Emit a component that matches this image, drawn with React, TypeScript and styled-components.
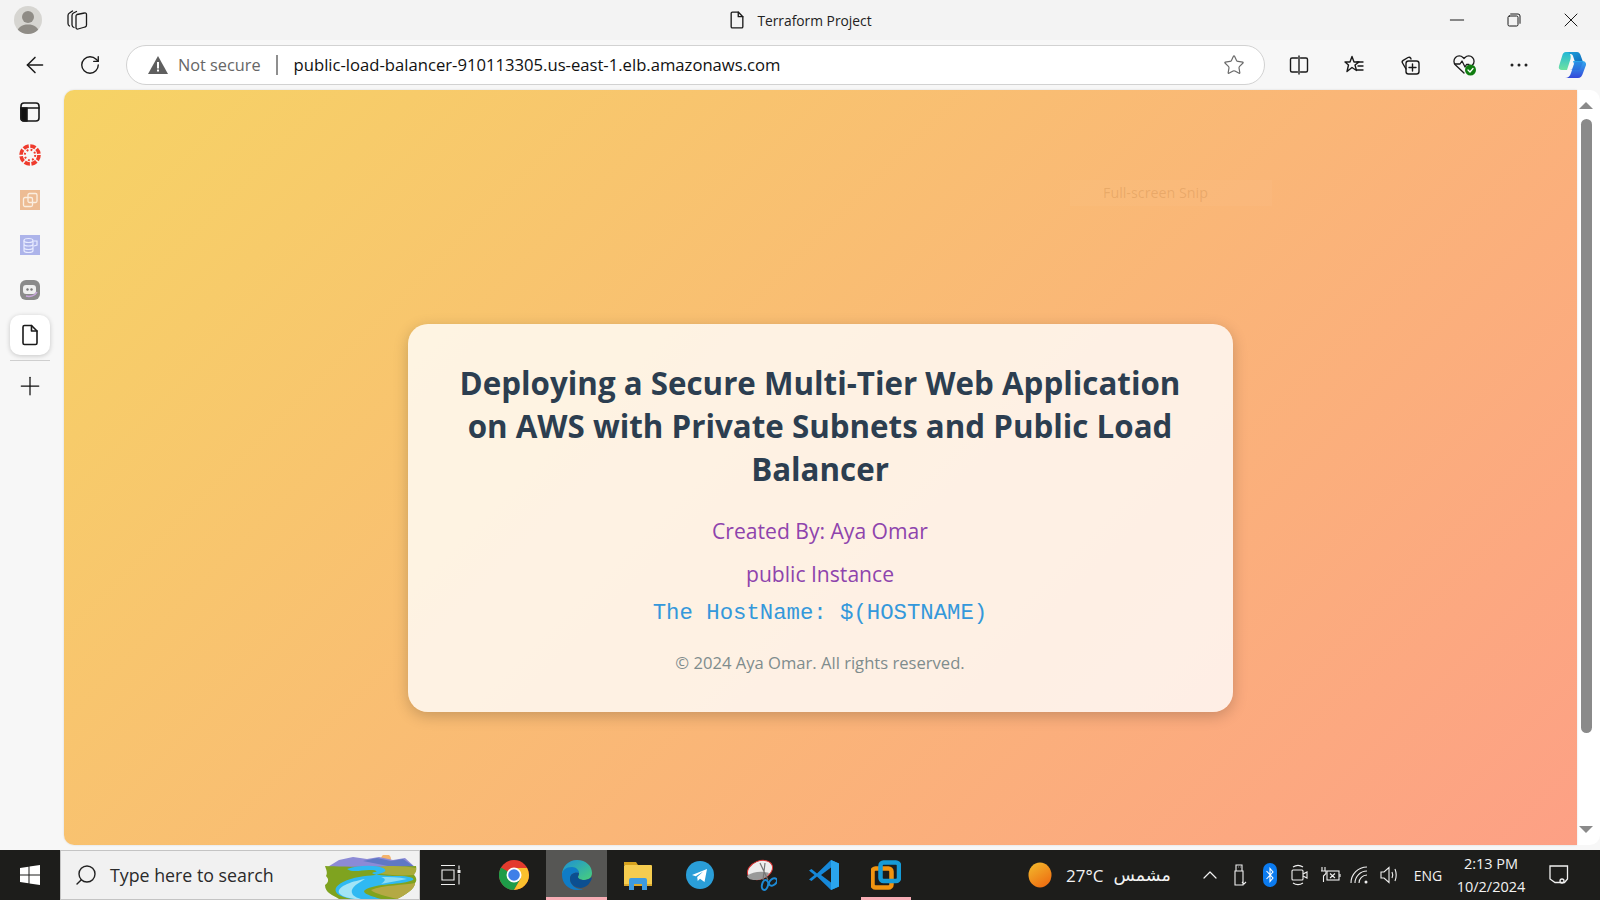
import React from "react";
import styled, { createGlobalStyle } from "styled-components";
import { ChevronUp, Plus, RotateCw, ArrowLeft, Search, Star } from "lucide-react";

const GlobalStyle = createGlobalStyle`
  html, body { margin: 0; padding: 0; height: 100%; overflow: hidden; }
  * { box-sizing: border-box; }
  body { font-family: "Open Sans", "Noto Sans", "DejaVu Sans", sans-serif; }
`;

const Shell = styled("div")`
  width: 1600px;
  height: 900px;
  display: grid;
  grid-template-rows: 40px 50px 1fr 50px;
  grid-template-columns: 64px 1fr;
  background: #f7f7f7;
`;

const TitleBar = styled("header")`
  grid-column: 1 / 3;
  display: grid;
  grid-template-columns: 1fr auto 1fr;
  align-items: center;
  background: #f3f3f3;
  padding-left: 14px;
`;

const TitleLeft = styled("div")`
  display: flex;
  align-items: center;
  gap: 23px;
`;

const Avatar = styled("div")`
  width: 28px;
  height: 28px;
  display: flex;
  border-radius: 50%;
  background: #d6d5d1;
  overflow: hidden;
`;

const TitleCenter = styled("div")`
  display: flex;
  align-items: center;
  gap: 10px;
  font-size: 13.8px;
  color: #222;
  margin-right: 15px;
`;

const WindowControls = styled("div")`
  justify-self: end;
  display: flex;
  align-items: center;
  height: 100%;
  padding-right: 1px;
`;

const WindowButton = styled("div")`
  width: 57px;
  height: 100%;
  display: flex;
  align-items: center;
  justify-content: center;
`;

const Toolbar = styled("div")`
  grid-column: 1 / 3;
  display: flex;
  align-items: center;
  padding-left: 20px;
  background: #f7f7f7;
`;

const NavButton = styled("div")<{ $w: number; $ml?: number }>`
  width: ${({ $w }) => $w}px;
  margin-left: ${({ $ml }) => $ml ?? 0}px;
  height: 100%;
  display: flex;
  align-items: center;
  justify-content: center;
  flex: none;
  color: #1a1a1a;
`;

const AddressBar = styled("div")`
  width: 1139px;
  height: 40px;
  margin: 0 6px 0 16px;
  flex: none;
  display: flex;
  align-items: center;
  padding: 0 19px 0 21px;
  background: #fff;
  border: 1px solid #d2d2d2;
  border-radius: 20px;
`;

const NotSecure = styled("span")`
  font-size: 16.3px;
  color: #666;
  margin-left: 10px;
`;

const Separator = styled("span")`
  width: 2px;
  height: 20px;
  background: #8f8f8f;
  margin: 0 16px 0 15px;
`;

const Url = styled("span")`
  font-size: 16.65px;
  color: #111;
  flex: 1;
  white-space: nowrap;
  padding-bottom: 2px;
`;

const ToolIcons = styled("div")`
  display: flex;
  align-items: center;
  height: 100%;
`;

const Sidebar = styled("aside")`
  display: flex;
  flex-direction: column;
  align-items: center;
  width: 60px;
  padding-top: 2px;
`;

const SideItem = styled("div")<{ $active?: boolean }>`
  width: 40px;
  height: 40px;
  margin-bottom: 5px;
  display: flex;
  align-items: center;
  justify-content: center;
  border-radius: 10px;
  background: ${({ $active }) => ($active ? "#fff" : "transparent")};
  box-shadow: ${({ $active }) => ($active ? "0 1px 5px rgba(0,0,0,.2)" : "none")};

  &:first-child {
    margin-bottom: 3px;
  }
`;

const SideDivider = styled("div")`
  width: 40px;
  height: 1px;
  background: #cfcfcf;
  margin-bottom: 5px;
`;

const Content = styled("main")`
  display: flex;
  min-height: 0;
  padding-bottom: 5px;
`;

const Page = styled("div")`
  position: relative;
  flex: 1;
  display: flex;
  align-items: center;
  justify-content: center;
  padding: 100px 1px 0 0;
  background: linear-gradient(135deg, #f6d365, #fda085);
  border-radius: 10px 0 0 10px;
  box-shadow: 0 0 2px rgba(0,0,0,.15);
`;

const Card = styled("section")`
  width: 825px;
  padding: 38px 40px 36px;
  text-align: center;
  background: rgba(255, 255, 255, 0.8);
  border-radius: 20px;
  box-shadow: 0 4px 15px rgba(0, 0, 0, 0.2);
`;

const Heading = styled("h1")`
  margin: 0 0 22px;
  font-size: 31.3px;
  line-height: 43px;
  font-weight: 700;
  color: #2c3e50;
`;

const Info = styled("p")`
  margin: 0;
  padding: 0 0 7px;
  font-size: 21.1px;
  line-height: 36px;
  color: #8e44ad;
`;

const Host = styled("p")`
  margin: 1px 0 0;
  font-family: "Liberation Mono", monospace;
  font-size: 22.3px;
  line-height: 26px;
  color: #3498db;
`;

const Copyright = styled("p")`
  margin: 24px 0 0;
  font-size: 16.6px;
  line-height: 26px;
  color: #7f8c8d;
`;

const SnipHint = styled("div")`
  position: absolute;
  left: 1006px;
  top: 90px;
  width: 202px;
  height: 26px;
  padding-left: 33px;
  font-size: 14.3px;
  line-height: 26px;
  color: rgba(190, 125, 60, 0.28);
  background: rgba(255, 255, 255, 0.035);
`;

const Scrollbar = styled("div")`
  width: 23px;
  flex: none;
  display: flex;
  flex-direction: column;
  align-items: center;
  padding: 12px 5px 0 0;
  background: #fff;
  border-radius: 0 10px 10px 0;
`;

const ScrollArrow = styled("div")<{ $down?: boolean }>`
  width: 0;
  height: 0;
  border-left: 7px solid transparent;
  border-right: 7px solid transparent;
  ${({ $down }) => ($down ? "border-top: 7px solid #8a8a8a;" : "border-bottom: 7px solid #8a8a8a;")}
`;

const ScrollThumb = styled("div")`
  width: 11px;
  height: 614px;
  margin: 10px 0 93px;
  border-radius: 6px;
  background: #8a8a8a;
`;

const Taskbar = styled("footer")`
  grid-column: 1 / 3;
  display: flex;
  align-items: stretch;
  background: #1d1d1b;
  color: #f2f2f2;
`;

const TaskSlot = styled("div")<{ $w: number; $active?: boolean; $open?: boolean }>`
  position: relative;
  width: ${({ $w }) => $w}px;
  flex: none;
  display: flex;
  align-items: center;
  justify-content: center;
  background: ${({ $active }) => ($active ? "#565654" : "transparent")};

  ${({ $active, $open }) =>
    $active || $open
      ? `&::after {
          content: "";
          position: absolute;
          bottom: 0;
          left: ${$open ? "6px" : "0"};
          right: ${$open ? "6px" : "0"};
          height: 3px;
          background: #f7adb5;
        }`
      : ""}
`;

const SearchBox = styled("div")`
  width: 360px;
  flex: none;
  display: flex;
  align-items: center;
  padding: 0 2px 0 13px;
  gap: 12px;
  background: #f1f1f1;
  border: 1px solid #c4c4c4;
  color: #2a2a2a;
  font-size: 17.8px;
`;

const SearchText = styled("span")`
  flex: 1;
  white-space: nowrap;
`;

const RiverArt = styled("svg")`
  align-self: flex-end;
  flex: none;
`;

const Temp = styled("span")`
  font-size: 17px;
  margin-left: 14px;
`;

const Arabic = styled("span")`
  font-family: "DejaVu Sans", sans-serif;
  font-size: 17.5px;
  margin-left: 10px;
`;

const Weather = styled("div")`
  width: 184px;
  margin-left: 94px;
  flex: none;
  display: flex;
  align-items: center;
  padding-left: 17px;
  white-space: nowrap;
`;

const Lang = styled("span")`
  font-size: 14px;
`;

const Clock = styled("div")`
  width: 70px;
  flex: none;
  margin-left: 5px;
  display: flex;
  flex-direction: column;
  justify-content: center;
  align-items: center;
  gap: 4px;
  font-size: 14.5px;
  line-height: 19px;
  white-space: nowrap;
`;

const Ic = ({ s = 24, children, ...p }: React.SVGProps<SVGSVGElement> & { s?: number }) => (
  <svg width={s} height={s} viewBox="0 0 24 24" fill="none" stroke="#1a1a1a" strokeWidth={1.4} strokeLinecap="round" strokeLinejoin="round" {...p}>
    {children}
  </svg>
);

const DocIcon = ({ s = 22 }: { s?: number }) => (
  <Ic s={s} strokeWidth={1.6}>
    <path d="M6.500 2.500h7L19 8v12a1.500 1.500 0 0 1-1.500 1.500h-11A1.500 1.500 0 0 1 5 20V4a1.500 1.500 0 0 1 1.500-1.500Z" />
    <path d="M13.500 2.500V8H19" />
  </Ic>
);

const Copilot = () => (
  <svg width="32" height="32" viewBox="0 0 32 32">
    <defs>
      <linearGradient id="cpA" x1="0" y1="0" x2="1" y2="1">
        <stop offset="0" stopColor="#1fa4dc" />
        <stop offset="1" stopColor="#0f6cbd" />
      </linearGradient>
      <linearGradient id="cpB" x1="0" y1="0" x2="0" y2="1">
        <stop offset="0" stopColor="#22b8d6" />
        <stop offset="1" stopColor="#6ee2a0" />
      </linearGradient>
      <linearGradient id="cpC" x1="0" y1="0" x2="0" y2="1">
        <stop offset="0" stopColor="#29a8ee" />
        <stop offset="1" stopColor="#2a3fd8" />
      </linearGradient>
    </defs>
    <path d="M10 3h11c2 0 3 1.500 3.500 3L27 13h-8l-2-6c-.5-1.500-1.500-2-3-2h-3L10 3Z" fill="url(#cpA)" />
    <path d="M10 3c-2 0-3.200 1.400-3.700 3.500L3 17c-.8 2.500.5 4 3 4h5l3.500-11C15.400 6.500 14 3 10 3Z" fill="url(#cpB)" />
    <path d="M17 12h9c2.500 0 4.500 1.500 4 4l-3 8c-.8 3-2.500 5-5 5H9c3 0 5-1.500 6-5l3-9Z" fill="url(#cpC)" opacity=".95" />
    <path d="M14 21h8c1 0 2-.5 2.400-1.800L27 13h-8l-3 7Z" fill="#1b5fd0" opacity=".35" />
  </svg>
);

const SmallApp = ({ bg, children }: { bg: string; children: React.ReactNode }) => (
  <svg width="20" height="20" viewBox="0 0 20 20">
    <rect width="20" height="20" fill={bg} />
    {children}
  </svg>
);

const River = () => (
  <RiverArt width="92" height="44" viewBox="0 6 92 44">
    <circle cx="61" cy="10" r="5" fill="#f4b36c" />
    <path d="M1 19 14 11l14-3 14 2 12-2 14 3 12-2 11 10-6 2H8Z" fill="#8c8ad6" />
    <path d="M38 12 52 9l14 3 12-2 13 9-28-2Z" fill="#5f78c4" />
    <path d="M0 17C20 18 70 18 91 17c1 4-1 7-3 8 4 3 4 7 2 9 0 6-10 12-18 16H14C8 46 0 44 0 36c4-3 4-6 1-9 2-3 0-7-1-10Z" fill="#7fa31f" />
    <path d="M50 19c10-3 30-2 41 0 1 3-1 5-2 7-14 1-27 0-37-2 8-2 4-4-2-5Z" fill="#a9ab3a" />
    <path d="M46 41c12-5 34-5 44-7 0 6-10 12-18 16-10-3-22-5-26-9Z" fill="#b4a944" />
    <path d="M22 20c12-4 28-4 36-1 6 3 0 5-8 7-10 1-22 2-32 7-8 4-10 9-4 13 4 2 10 4 16 4h26c-10-3-20-6-16-9 10-7 38-5 48-10 2-2-4-4-16-4-12 0-32-2-22-4 4-1 0-2-6-2-8 0-16 3-22-1Z" fill="#2fb9f2" />
    <path d="M14 44c-2-6 10-11 26-14-10 6-16 10-12 16 2 2 5 3 8 4h-6c-8-1-14-3-16-6Z" fill="#a2e4f6" />
    <path d="M56 28c8 0 18 0 26 2-8 2-18 3-26 5 4-3 6-5 0-7Z" fill="#8adcf5" />
  </RiverArt>
);

const Chrome = () => (
  <svg width="30" height="30" viewBox="0 0 30 30">
    <circle cx="15" cy="15" r="15" fill="#e33b2e" />
    <path d="M15 15 2 7.500A15 15 0 0 0 15 30l7.500-13Z" fill="#1e9c48" />
    <path d="M15 8h13a15 15 0 0 1 2 7 15 15 0 0 1-15 15l7-12Z" fill="#fbc02d" />
    <circle cx="15" cy="15" r="7.500" fill="#fff" />
    <circle cx="15" cy="15" r="5.800" fill="#3f7fe8" />
  </svg>
);

const Edge = () => (
  <svg width="32" height="32" viewBox="0 0 32 32">
    <defs>
      <linearGradient id="edA" x1="0" y1="0" x2="1" y2="1">
        <stop offset="0" stopColor="#1c8fd8" />
        <stop offset="1" stopColor="#49d07a" />
      </linearGradient>
    </defs>
    <path d="M16 1c9 0 15 6 15 13 0 5-4 7-8 7-3 0-6-1-6-3 0-1 1-1.500 1-3 0-3-3-6-7-6C6 9 2 12 1 16 1 8 7 1 16 1Z" fill="url(#edA)" />
    <path d="M1 16c0-5 4-8 10-8 4 0 7 3 7 6-5-1-9 1-9 6 0 5 5 10 11 10 2 0 3-.3 4-.7A15 15 0 0 1 16 31C7 31 1 24 1 16Z" fill="#0f7cc7" />
    <path d="M9 20c0-5 4-7 9-6 0 1-1 2-1 4 0 2 3 3 6 3 3 0 6-1 8-3-1 6-5 10-11 11-6 0-11-4-11-9Z" fill="#0b4f91" />
  </svg>
);

const Files = () => (
  <svg width="28" height="30" viewBox="0 0 28 30">
    <path d="M0 2h12l2 3H0Z" fill="#d6a21e" />
    <rect y="5" width="28" height="21" rx="1" fill="#f5cc4f" />
    <rect y="24" width="28" height="2" fill="#dba92c" />
    <path d="M5 30V20a2 2 0 0 1 2-2h14a2 2 0 0 1 2 2v10h-5v-6h-8v6Z" fill="#3e9be0" />
  </svg>
);

const Telegram = () => (
  <svg width="28" height="28" viewBox="0 0 28 28">
    <circle cx="14" cy="14" r="14" fill="#2a9ed8" />
    <path d="M6 14 21 8l-2.500 13-4.500-3.300-2.300 2.300-.5-4 6-5.500-7.500 4.700Z" fill="#fff" />
  </svg>
);

const Snip = () => (
  <svg width="30" height="32" viewBox="0 0 30 32">
    <ellipse cx="13" cy="11" rx="13" ry="9" transform="rotate(-22 13 11)" fill="#eee" stroke="#d33" strokeWidth="1" />
    <path d="M0 17c6-5 16-5 22-3-2 5-8 7-14 7-4 0-7-1-8-4Z" fill="#999" />
    <path d="M13 4l8 17M18 4l-2 17" stroke="#777" strokeWidth="1.200" />
    <ellipse cx="18" cy="26" rx="3" ry="5" fill="none" stroke="#1d8ad6" strokeWidth="2" transform="rotate(15 18 26)" />
    <ellipse cx="26" cy="23" rx="3" ry="4.500" fill="none" stroke="#1d8ad6" strokeWidth="2" transform="rotate(50 26 23)" />
  </svg>
);

const VSCode = () => (
  <svg width="30" height="30" viewBox="0 0 30 30">
    <path d="M22 0 30 3.500v23L22 30 8 16.500 2.500 21 0 19.500 5.500 15 0 10.500 2.500 9 8 13.500Z" fill="#1688d9" />
    <path d="M22 7.500 12 15l10 7.500Z" fill="#1d1d1b" />
    <path d="M22 0 30 3.500v23L22 30Z" fill="#2aa5ee" />
  </svg>
);

const VMware = () => (
  <svg width="30" height="30" viewBox="0 0 30 30">
    <rect x="1.500" y="8.500" width="19" height="19" rx="3" fill="none" stroke="#f29410" strokeWidth="4.500" />
    <rect x="9.500" y="2.500" width="18.500" height="18.500" rx="3" fill="none" stroke="#169bd7" strokeWidth="4.500" />
  </svg>
);

const W = { stroke: "#f0f0f0", strokeWidth: 1.1 };

export default function App() {
  return (
    <Shell>
      <GlobalStyle />
      <TitleBar>
        <TitleLeft>
          <Avatar>
            <svg width="28" height="28" viewBox="0 0 28 28">
              <circle cx="14" cy="11" r="6" fill="#8f8c86" />
              <path d="M3 28c0-7 5-9.500 11-9.500S25 21 25 28Z" fill="#8f8c86" />
            </svg>
          </Avatar>
          <Ic s={24} strokeWidth={1.3}>
            <path d="M12 6.500 19.500 5a1.500 1.500 0 0 1 2 1.500v10.500a2 2 0 0 1-1.500 2l-7 2a1.500 1.500 0 0 1-2-1.500V8.500a2 2 0 0 1 1-2Z" />
            <path d="M11.500 3.500 8.500 5a3 3 0 0 0-1.500 2.500v9.500a3 3 0 0 0 2 2.500" />
            <path d="M7.500 3 4.500 5A3 3 0 0 0 3 7.500v8a3 3 0 0 0 1.500 2.500" />
          </Ic>
        </TitleLeft>
        <TitleCenter>
          <DocIcon s={20} />
          Terraform Project
        </TitleCenter>
        <WindowControls>
          <WindowButton>
            <Ic s={16} strokeWidth={1.5}><path d="M2 12h20" /></Ic>
          </WindowButton>
          <WindowButton>
            <Ic s={16} strokeWidth={1.5}><rect x="3" y="6" width="15" height="15" rx="2" /><path d="M7 3h11a3 3 0 0 1 3 3v11" /></Ic>
          </WindowButton>
          <WindowButton>
            <Ic s={16} strokeWidth={1.5}><path d="m3 3 18 18M21 3 3 21" /></Ic>
          </WindowButton>
        </WindowControls>
      </TitleBar>

      <Toolbar>
        <NavButton $w={30}><ArrowLeft size={26} strokeWidth={1.4} /></NavButton>
        <NavButton $w={40} $ml={20}><RotateCw size={22} strokeWidth={1.5} /></NavButton>
        <AddressBar>
          <svg width="20" height="18" viewBox="0 0 20 18">
            <path d="M10 0 20 18H0Z" fill="#5f5f5f" />
            <rect x="9" y="6" width="2" height="6.500" fill="#fff" />
            <rect x="9" y="13.500" width="2" height="2" fill="#fff" />
          </svg>
          <NotSecure>Not secure</NotSecure>
          <Separator />
          <Url>public-load-balancer-910113305.us-east-1.elb.amazonaws.com</Url>
          <Star size={22} strokeWidth={1.3} color="#6a6a6a" />
        </AddressBar>
        <ToolIcons>
          <NavButton $w={55}>
            <Ic>
              <path d="M10.500 5H5a1.500 1.500 0 0 0-1.500 1.500v11A1.500 1.500 0 0 0 5 19h5.500" />
              <path d="M13.500 5H19a1.500 1.500 0 0 1 1.500 1.500v11A1.500 1.500 0 0 1 19 19h-5.500" />
              <path d="M12 3v18" />
            </Ic>
          </NavButton>
          <NavButton $w={56}>
            <Ic>
              <path d="M10 3.500 12 9h5l-4 3 1.500 5.500-4.500-3-5 4 1.500-6.500L3 9h5Z" />
              <path d="M15 9h6M16 13h5M15 17h6" />
            </Ic>
          </NavButton>
          <NavButton $w={55}>
            <Ic>
              <path d="M8 16 4.500 10a2 2 0 0 1 .7-2.700L10 4.500a2 2 0 0 1 2.700.7L13 6" />
              <rect x="8" y="8" width="13" height="13" rx="2.500" />
              <path d="M14.500 11v7M11 14.500h7" />
            </Ic>
          </NavButton>
          <NavButton $w={55}>
            <svg width="26" height="24" viewBox="0 0 26 24" fill="none" stroke="#1a1a1a" strokeWidth="1.300" strokeLinejoin="round" strokeLinecap="round">
              <path d="M12 20 3.500 12A5.300 5.300 0 0 1 11 4.500l1 1 1-1A5.300 5.300 0 0 1 20.500 12" />
              <path d="M3 11h5l2-3 3 6 1.500-2.500H17" />
              <circle cx="18.500" cy="17" r="5.500" fill="#107c10" stroke="none" />
              <path d="m16 17 2 2 3-3.500" stroke="#fff" />
            </svg>
          </NavButton>
          <NavButton $w={53}>
            <svg width="18" height="4" viewBox="0 0 18 4"><circle cx="2" cy="2" r="1.500" fill="#222" /><circle cx="9" cy="2" r="1.500" fill="#222" /><circle cx="16" cy="2" r="1.500" fill="#222" /></svg>
          </NavButton>
          <NavButton $w={53}><Copilot /></NavButton>
        </ToolIcons>
      </Toolbar>

      <Sidebar>
        <SideItem>
          <Ic s={24} strokeWidth={1.6}>
            <rect x="3" y="3" width="18" height="18" rx="3" />
            <path d="M3 8h18" />
            <path d="M3 8h6v13H6a3 3 0 0 1-3-3Z" fill="#111" />
          </Ic>
        </SideItem>
        <SideItem>
          <svg width="22" height="22" viewBox="0 0 22 22">
            <circle cx="11" cy="11" r="9" fill="none" stroke="#ef3b2d" strokeWidth="3.600" strokeDasharray="5.500 1.570" />
            <circle cx="11" cy="11" r="5.200" fill="none" stroke="#ef3b2d" strokeWidth="2" strokeDasharray="1.800 2.280" />
          </svg>
        </SideItem>
        <SideItem>
          <SmallApp bg="#edbc94">
            <rect x="3.500" y="7.500" width="9" height="9" rx="1.500" fill="none" stroke="#fbeee0" strokeWidth="1.300" />
            <rect x="8" y="3.500" width="9" height="9" rx="1.500" fill="none" stroke="#fbeee0" strokeWidth="1.300" />
          </SmallApp>
        </SideItem>
        <SideItem>
          <SmallApp bg="#adb4ea">
            <ellipse cx="8.500" cy="5.500" rx="4.500" ry="2" fill="none" stroke="#e8ebff" strokeWidth="1.200" />
            <path d="M4 5.500v10c0 1.200 2 2 4.500 2s4.500-.8 4.500-2v-10M4 9c0 1.200 2 2 4.500 2S13 10.200 13 9M4 12.500c0 1.200 2 2 4.500 2s4.500-.8 4.500-2M14 6h3v4l-3 1" fill="none" stroke="#e8ebff" strokeWidth="1.200" />
          </SmallApp>
        </SideItem>
        <SideItem>
          <svg width="20" height="20" viewBox="0 0 20 20">
            <rect width="20" height="20" rx="6" fill="#8a8a8a" />
            <rect x="3" y="5" width="13" height="9" rx="3" fill="#efefef" />
            <circle cx="7.500" cy="9.500" r="1.200" fill="#777" />
            <circle cx="11.500" cy="9.500" r="1.200" fill="#777" />
            <path d="M6 16c4 1 9 0 11-4" stroke="#c9a6dc" strokeWidth="1.500" fill="none" />
          </svg>
        </SideItem>
        <SideItem $active>
          <DocIcon s={24} />
        </SideItem>
        <SideDivider />
        <SideItem>
          <Plus size={30} strokeWidth={1} color="#111" />
        </SideItem>
      </Sidebar>

      <Content>
        <Page>
          <SnipHint>Full-screen Snip</SnipHint>
          <Card>
            <Heading>Deploying a Secure Multi-Tier Web Application on AWS with Private Subnets and Public Load Balancer</Heading>
            <Info>Created By: Aya Omar</Info>
            <Info>public Instance</Info>
            <Host>The HostName: $(HOSTNAME)</Host>
            <Copyright>© 2024 Aya Omar. All rights reserved.</Copyright>
          </Card>
        </Page>
        <Scrollbar>
          <ScrollArrow />
          <ScrollThumb />
          <ScrollArrow $down />
        </Scrollbar>
      </Content>

      <Taskbar>
        <TaskSlot $w={60}>
          <svg width="20" height="20" viewBox="0 0 20 20" fill="#fff">
            <path d="M0 3 8.500 1.800v7.700H0ZM9.500 1.600 20 0v9.500H9.500ZM0 10.500h8.500v7.700L0 17ZM9.500 10.500H20V20L9.500 18.400Z" />
          </svg>
        </TaskSlot>
        <SearchBox>
          <Search size={24} strokeWidth={1.4} color="#222" style={{ transform: "scaleX(-1)" }} />
          <SearchText>Type here to search</SearchText>
          <River />
        </SearchBox>
        <TaskSlot $w={62}>
          <svg width="22" height="20" viewBox="0 0 22 20" fill="none" {...W}>
            <path d="M1 .5h14M1 19.500h14M2 5h12v10H2ZM19 .5v4M19 9v10.500" />
            <rect x="17.500" y="5" width="3" height="3" fill="#f0f0f0" stroke="none" />
          </svg>
        </TaskSlot>
        <TaskSlot $w={64}><Chrome /></TaskSlot>
        <TaskSlot $w={61} $active><Edge /></TaskSlot>
        <TaskSlot $w={62}><Files /></TaskSlot>
        <TaskSlot $w={62}><Telegram /></TaskSlot>
        <TaskSlot $w={61}><Snip /></TaskSlot>
        <TaskSlot $w={63}><VSCode /></TaskSlot>
        <TaskSlot $w={62} $open><VMware /></TaskSlot>
        <Weather>
          <svg width="24" height="26" viewBox="0 0 24 26">
            <defs>
              <linearGradient id="sun" x1="0.200" y1="0" x2="0.800" y2="1">
                <stop offset="0" stopColor="#f2b62b" />
                <stop offset="1" stopColor="#ee6a10" />
              </linearGradient>
            </defs>
            <ellipse cx="12" cy="13" rx="11.500" ry="12.500" fill="url(#sun)" />
          </svg>
          <Temp>27°C</Temp>
          <Arabic dir="rtl">مشمس</Arabic>
        </Weather>
        <TaskSlot $w={30}><ChevronUp size={24} strokeWidth={1.2} /></TaskSlot>
        <TaskSlot $w={30}>
          <svg width="14" height="22" viewBox="0 0 14 22" fill="none" {...W}>
            <path d="M3 1h6v6H3ZM2 7h8v14H2ZM9 18l2 2 2-2" />
            <path d="M5 3h.5M7 3h.5" />
          </svg>
        </TaskSlot>
        <TaskSlot $w={30}>
          <svg width="14" height="24" viewBox="0 0 14 24">
            <rect width="14" height="24" rx="7" fill="#0b7bf0" />
            <path d="M3.500 8 10 15l-3 3.500V5.500L10 9l-6.500 7" fill="none" stroke="#fff" strokeWidth="1.100" />
          </svg>
        </TaskSlot>
        <TaskSlot $w={30}>
          <svg width="20" height="22" viewBox="0 0 20 22" fill="none" {...W}>
            <rect x="2" y="6" width="11" height="10" rx="1" />
            <path d="m13 10 4-2v6l-4-2M3 3c3-2 7-2 10 0M3 19c3 2 7 2 10 0" />
          </svg>
        </TaskSlot>
        <TaskSlot $w={30}>
          <svg width="22" height="18" viewBox="0 0 22 18" fill="none" {...W}>
            <path d="M3 1v4M6 1v4M2 5h5v2.500L4.500 10 4.500 16" />
            <rect x="8" y="5" width="12" height="9" />
            <path d="m11 7.500 5 4.500M16 7.500 11 12M21 8v3" />
          </svg>
        </TaskSlot>
        <TaskSlot $w={30}>
          <svg width="20" height="20" viewBox="0 0 20 20" fill="none" {...W}>
            <path d="M1 18A16 16 0 0 1 17 2M5 18A12 12 0 0 1 17 6M9 18a8 8 0 0 1 8-8" />
            <circle cx="16" cy="17" r="1.500" fill="#f0f0f0" stroke="none" />
          </svg>
        </TaskSlot>
        <TaskSlot $w={30}>
          <svg width="20" height="20" viewBox="0 0 20 20" fill="none" {...W}>
            <path d="M1 7h3l5-4.500v15L4 13H1ZM12 7c1 2 1 4 0 6M15 4c1.600 4 1.600 8 0 12" />
          </svg>
        </TaskSlot>
        <TaskSlot $w={46}><Lang>ENG</Lang></TaskSlot>
        <Clock>
          <span>2:13 PM</span>
          <span>10/2/2024</span>
        </Clock>
        <TaskSlot $w={65}>
          <svg width="20" height="20" viewBox="0 0 20 20" fill="none" stroke="#f0f0f0" strokeWidth="1.300">
            <path d="M1 1h17.500v13l-3 3.500H6L1 14Z" />
            <circle cx="13" cy="16" r="2" />
          </svg>
        </TaskSlot>
      </Taskbar>
    </Shell>
  );
}
